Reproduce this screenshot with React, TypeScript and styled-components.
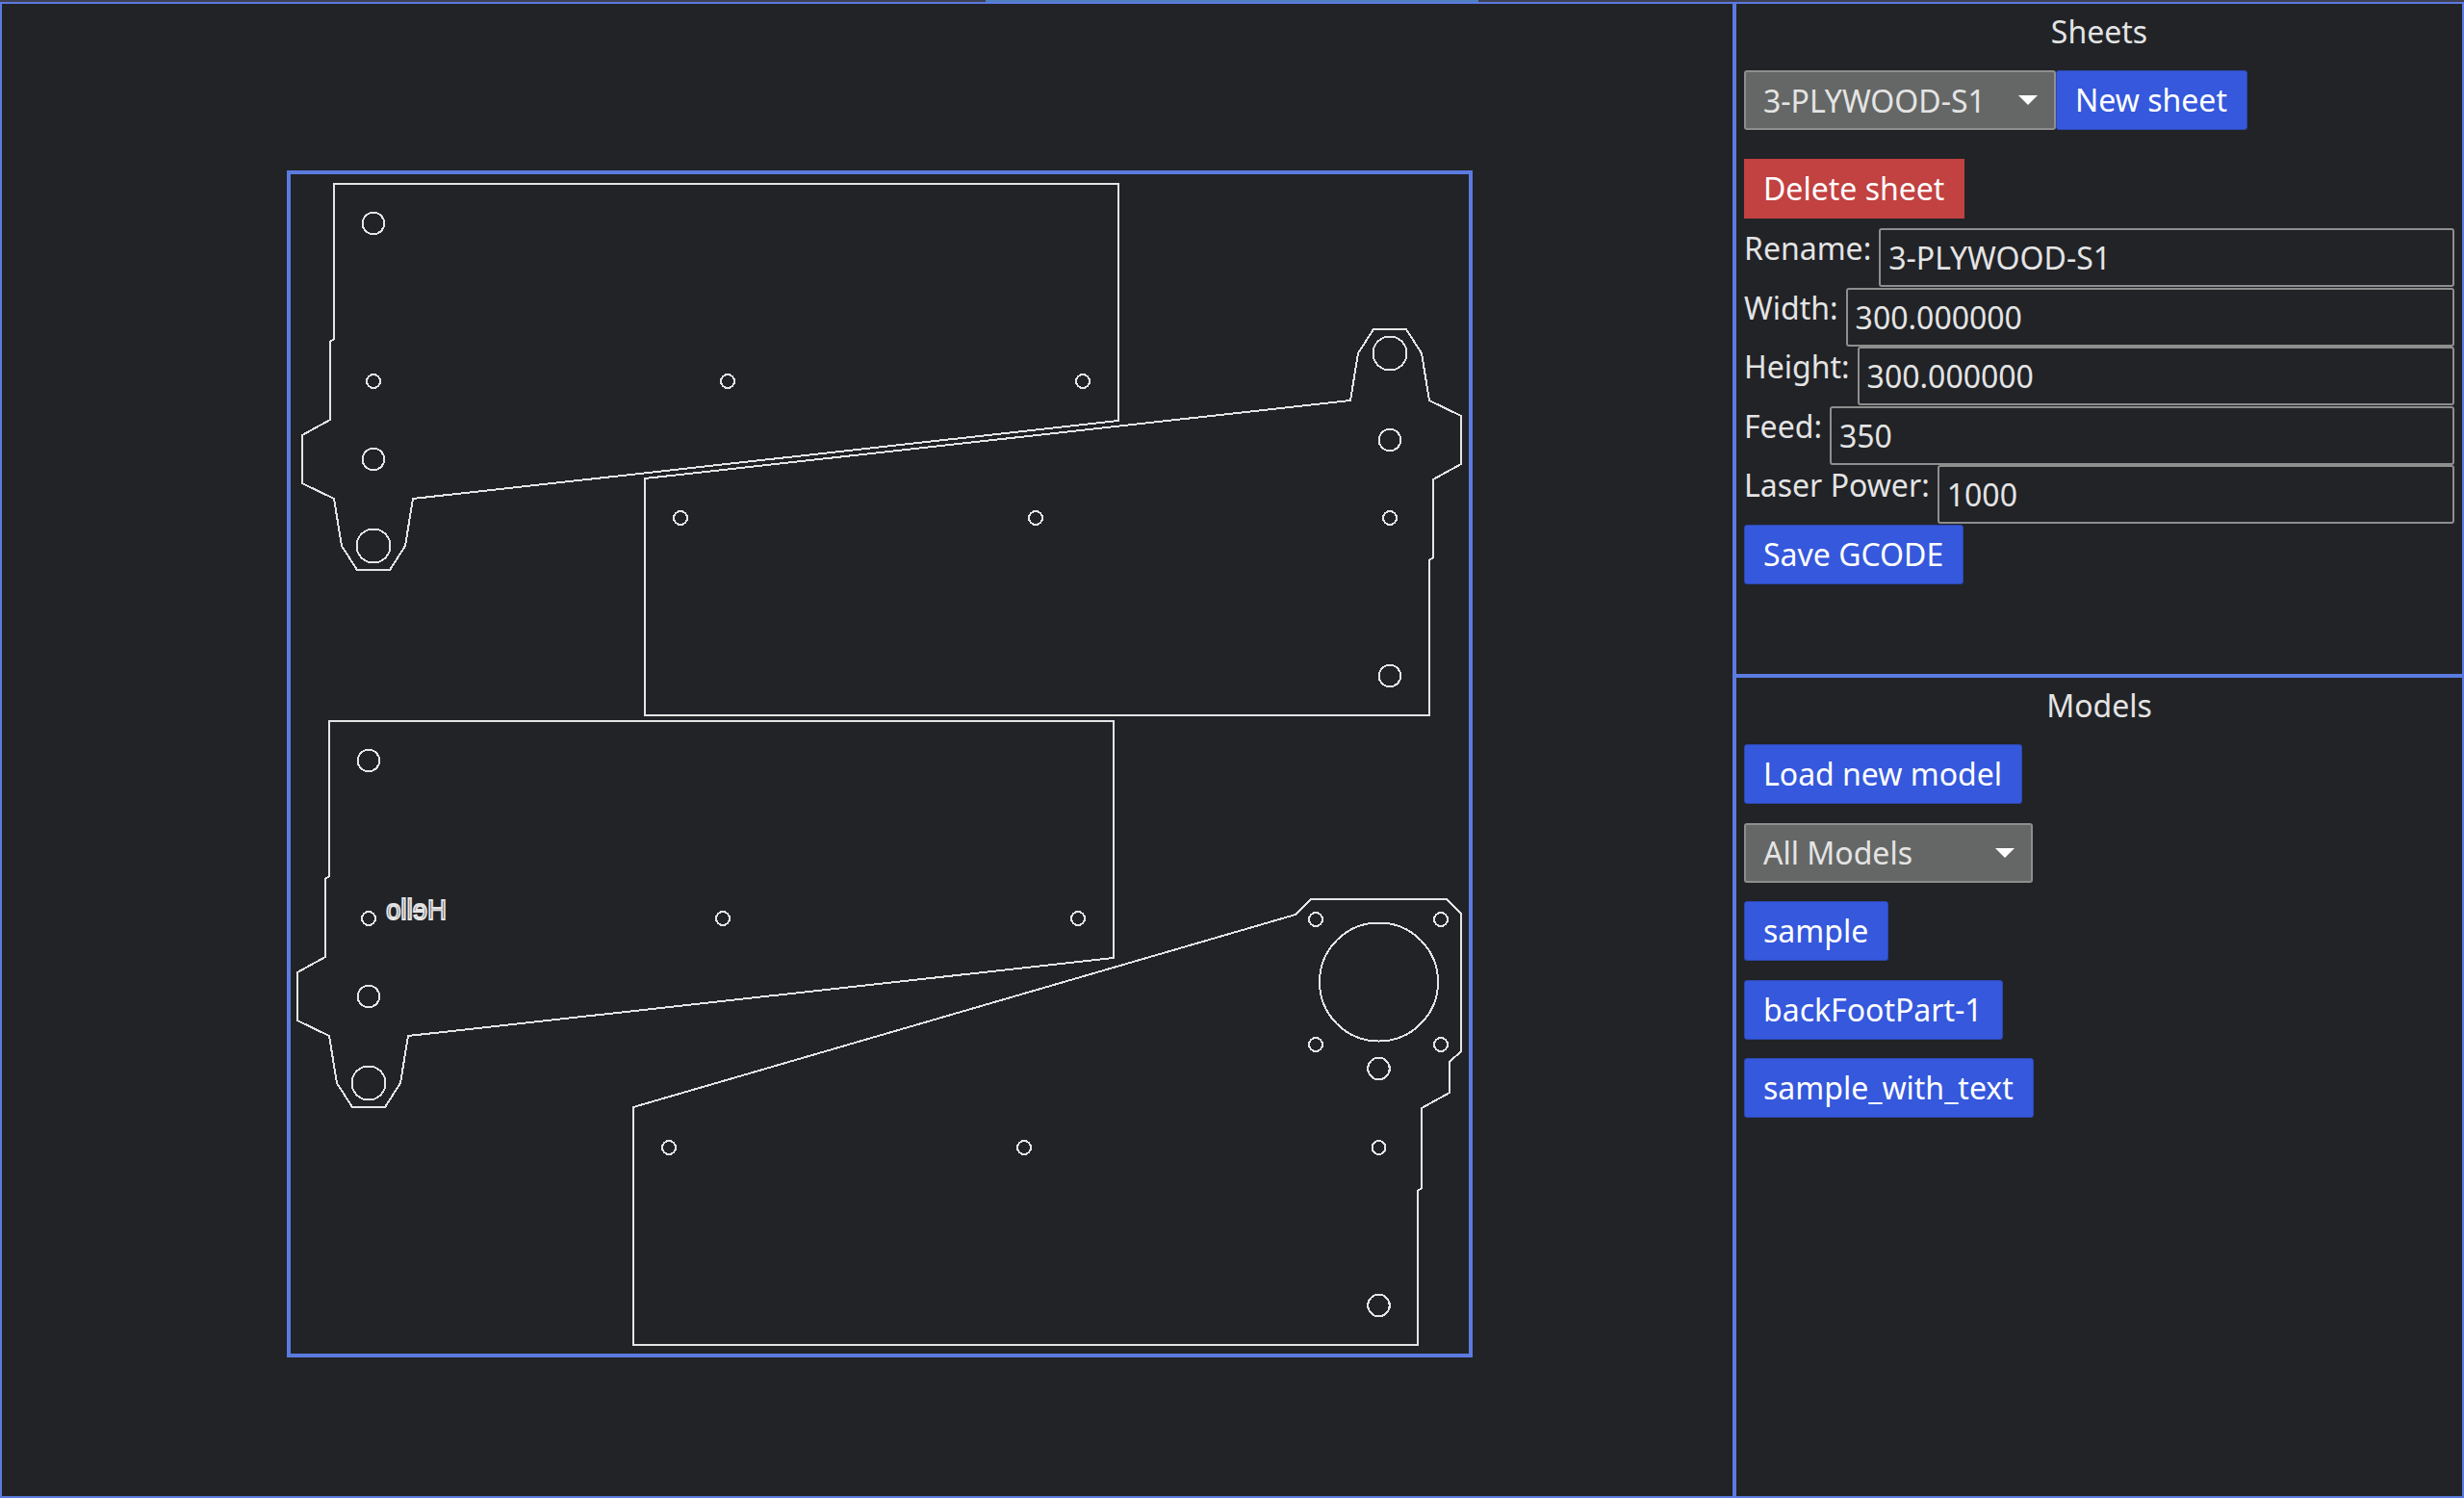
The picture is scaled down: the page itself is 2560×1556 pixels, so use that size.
import styled, { createGlobalStyle } from 'styled-components';

const accent = '#5b7be0';
const ink = '#e4e4e4';
const panel = '#212327';

const GlobalStyle = createGlobalStyle`
  html, body {
    margin: 0;
    padding: 0;
    height: 100%;
    background: ${panel};
    color: ${ink};
    font-family: "Noto Sans", "Open Sans", sans-serif;
    font-size: 32px;
    overflow: hidden;
  }
  * {
    box-sizing: border-box;
  }
`;

const Page = styled.div`
  width: 2560px;
  height: 1556px;
  display: flex;
  flex-direction: column;
`;

const TopStrip = styled.div`
  height: 2px;
  flex: none;
  display: flex;
  justify-content: center;
  background: #3f3f50;
`;

const TopStripThumb = styled.div`
  width: 512px;
  background: #4f7fbf;
`;

const Layout = styled.div`
  flex: 1;
  min-height: 0;
  display: flex;
  border: 2px solid ${accent};
`;

const CanvasPane = styled.div`
  width: 1798px;
  flex: none;
`;

const Sidebar = styled.div`
  flex: 1;
  min-width: 0;
  display: flex;
  flex-direction: column;
  border-left: 4px solid ${accent};
`;

const SheetsPane = styled.section`
  height: 700px;
  flex: none;
  padding: 0 8px;
  border-bottom: 4px solid ${accent};
`;

const ModelsPane = styled.section`
  flex: 1;
  padding: 0 8px;
`;

const PaneTitle = styled.div`
  text-align: center;
  height: 69px;
  line-height: 58px;
`;

const Row = styled.div`
  display: flex;
  align-items: flex-start;
`;

const Stack = styled.div`
  display: flex;
  flex-direction: column;
  align-items: flex-start;
  gap: 19.6px;
`;

const Button = styled.button<{ $danger?: boolean }>`
  height: 62px;
  padding: 0 20px 0 19px;
  font: inherit;
  line-height: 1;
  white-space: nowrap;
  color: #fff;
  background: ${(p) => (p.$danger ? '#c24141' : '#3558dc')};
  border: 1px solid ${(p) => (p.$danger ? '#c24141' : '#2d48b0')};
  border-radius: ${(p) => (p.$danger ? '0' : '3px')};
`;

const DeleteButton = styled(Button)`
  margin-top: 30px;
  margin-bottom: 10px;
  display: block;
`;

const SaveButton = styled(Button)`
  display: block;
`;

const SelectBox = styled.div<{ $width: number }>`
  width: ${(p) => p.$width}px;
  height: 62px;
  padding: 0 17px 0 18px;
  display: flex;
  align-items: center;
  justify-content: space-between;
  background: #656766;
  border: 2px solid #8e8e8e;
  border-radius: 3px;
  color: ${ink};
  white-space: nowrap;
`;

const Caret = styled.span`
  width: 0;
  height: 0;
  border-left: 10px solid transparent;
  border-right: 10px solid transparent;
  border-top: 10px solid #fff;
`;

const Field = styled.label`
  height: 61.5px;
  display: flex;
  align-items: flex-start;
  gap: 8px;
  line-height: 41px;
  white-space: nowrap;
`;

const FieldInput = styled.input`
  flex: 1;
  min-width: 0;
  height: 61px;
  padding: 0 8px;
  font: inherit;
  color: ${ink};
  background: ${panel};
  border: 2px solid #8e8e8e;
  border-radius: 3px;
  outline: none;
`;

const Outline = styled.g`
  fill: none;
  stroke: ${ink};
  stroke-width: 2;
  shape-rendering: crispEdges;
`;

const MirrorText = styled.text`
  font-family: "Liberation Sans", Arial, sans-serif;
  font-size: 30px;
  fill: none;
  stroke: ${ink};
  stroke-width: 2;
`;

const fields = [
  { label: 'Rename:', value: '3-PLYWOOD-S1' },
  { label: 'Width:', value: '300.000000' },
  { label: 'Height:', value: '300.000000' },
  { label: 'Feed:', value: '350' },
  { label: 'Laser Power:', value: '1000' },
];

const models = ['sample', 'backFootPart-1', 'sample_with_text'];

const BracketPart = () => (
  <>
    <polygon points="347,191 1162,191 1162,437 429,518 421,567 405,592 371,592 355,567 347,518 314,502 314,452 343,436 343,355 347,352" />
    <circle cx={388} cy={232} r={11.3} />
    <circle cx={388} cy={396} r={7} />
    <circle cx={756} cy={396} r={7} />
    <circle cx={1125} cy={396} r={7} />
    <circle cx={388} cy={477} r={11.3} />
    <circle cx={388} cy={567} r={17.5} />
  </>
);

const MotorPart = () => (
  <>
    <polygon points="658,1150 1346,950 1362,934 1503,934 1518,949 1518,1092 1506,1103 1506,1135 1477,1151 1477,1234 1473,1237 1473,1397 658,1397" />
    <circle cx={1367} cy={955} r={7} />
    <circle cx={1497} cy={955} r={7} />
    <circle cx={1367} cy={1085} r={7} />
    <circle cx={1497} cy={1085} r={7} />
    <circle cx={1432.5} cy={1020} r={61.5} />
    <circle cx={1432.5} cy={1110} r={11.3} />
    <circle cx={1432.5} cy={1192} r={7} />
    <circle cx={695} cy={1192} r={7} />
    <circle cx={1064} cy={1192} r={7} />
    <circle cx={1432.5} cy={1356} r={11.3} />
  </>
);

const SheetView = () => (
  <svg width="1798" height="1550" viewBox="2 4 1798 1550" style={{ display: 'block' }}>
    <rect x={300} y={179} width={1228} height={1229} fill="none" stroke={accent} strokeWidth={4} />
    <Outline>
      <BracketPart />
      <g transform="translate(1832 934) rotate(180)">
        <BracketPart />
      </g>
      <g transform="translate(-5 558)">
        <BracketPart />
      </g>
      <MotorPart />
    </Outline>
    <MirrorText transform="translate(464 955) scale(-0.92 1)">Hello</MirrorText>
  </svg>
);

export default function App() {
  return (
    <Page>
      <GlobalStyle />
      <TopStrip>
        <TopStripThumb />
      </TopStrip>
      <Layout>
        <CanvasPane>
          <SheetView />
        </CanvasPane>
        <Sidebar>
          <SheetsPane>
            <PaneTitle>Sheets</PaneTitle>
            <Row>
              <SelectBox $width={324}>
                3-PLYWOOD-S1
                <Caret />
              </SelectBox>
              <Button>New sheet</Button>
            </Row>
            <DeleteButton $danger>Delete sheet</DeleteButton>
            {fields.map((f) => (
              <Field key={f.label}>
                {f.label}
                <FieldInput defaultValue={f.value} />
              </Field>
            ))}
            <SaveButton>Save GCODE</SaveButton>
          </SheetsPane>
          <ModelsPane>
            <PaneTitle>Models</PaneTitle>
            <Stack>
              <Button>Load new model</Button>
              <SelectBox $width={300}>
                All Models
                <Caret />
              </SelectBox>
              {models.map((m) => (
                <Button key={m}>{m}</Button>
              ))}
            </Stack>
          </ModelsPane>
        </Sidebar>
      </Layout>
    </Page>
  );
}
